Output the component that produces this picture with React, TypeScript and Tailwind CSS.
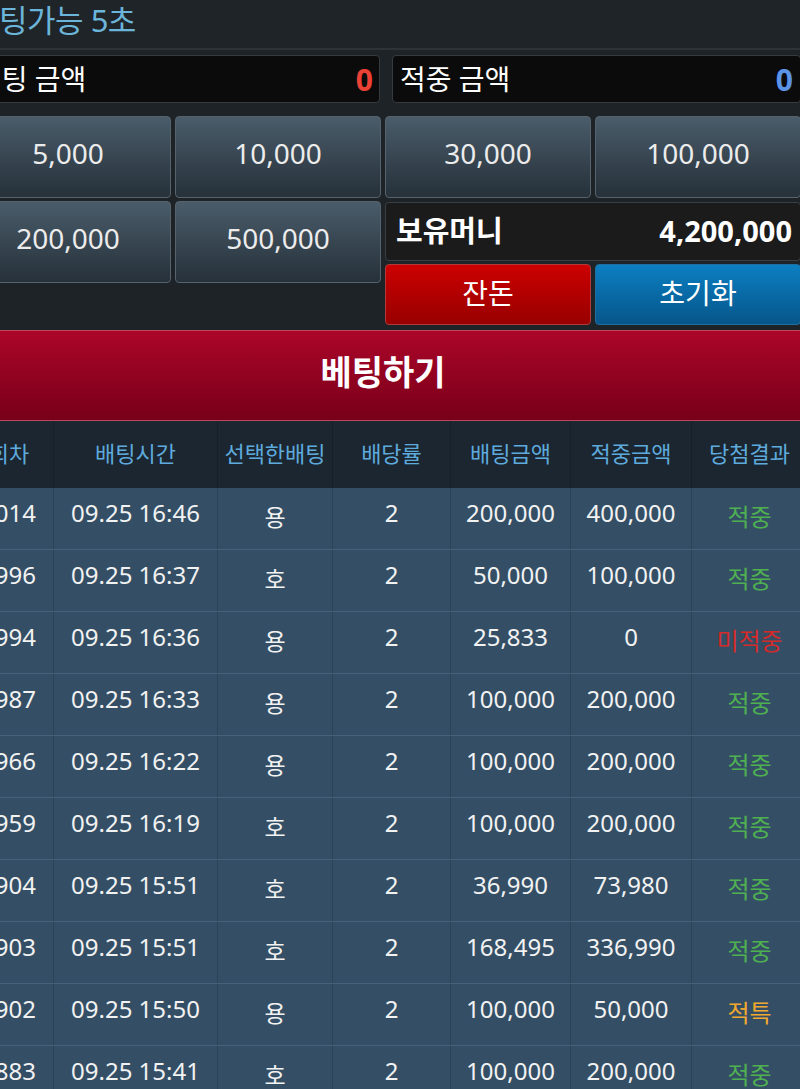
import React from "react";

type Row = {
  no: string;
  time: string;
  pick: string;
  odds: string;
  bet: string;
  win: string;
  result: "적중" | "미적중" | "적특";
};

const rows: Row[] = [
  { no: "1014", time: "09.25 16:46", pick: "용", odds: "2", bet: "200,000", win: "400,000", result: "적중" },
  { no: "996", time: "09.25 16:37", pick: "호", odds: "2", bet: "50,000", win: "100,000", result: "적중" },
  { no: "994", time: "09.25 16:36", pick: "용", odds: "2", bet: "25,833", win: "0", result: "미적중" },
  { no: "987", time: "09.25 16:33", pick: "용", odds: "2", bet: "100,000", win: "200,000", result: "적중" },
  { no: "966", time: "09.25 16:22", pick: "용", odds: "2", bet: "100,000", win: "200,000", result: "적중" },
  { no: "959", time: "09.25 16:19", pick: "호", odds: "2", bet: "100,000", win: "200,000", result: "적중" },
  { no: "904", time: "09.25 15:51", pick: "호", odds: "2", bet: "36,990", win: "73,980", result: "적중" },
  { no: "903", time: "09.25 15:51", pick: "호", odds: "2", bet: "168,495", win: "336,990", result: "적중" },
  { no: "902", time: "09.25 15:50", pick: "용", odds: "2", bet: "100,000", win: "50,000", result: "적특" },
  { no: "883", time: "09.25 15:41", pick: "호", odds: "2", bet: "100,000", win: "200,000", result: "적중" },
];

const resultColor: Record<Row["result"], string> = {
  적중: "text-[#4fb051]",
  미적중: "text-[#d42a2a]",
  적특: "text-[#f0a92e]",
};

function AmountButton({ label }: { label: string }) {
  return (
    <button className="h-[82px] w-full rounded-[4px] border border-[#56626c] bg-linear-to-b from-[#4a5c6a] to-[#26313a] text-[28px] text-[#ececec] flex items-center justify-center pb-[8px]">
      {label}
    </button>
  );
}

const grid = "grid grid-cols-[89px_164px_115px_118px_120px_121px_109px]";

export default function App() {
  return (
    <div className="w-[800px] h-[1089px] overflow-hidden bg-[#1e2327] font-['Noto_Sans','Noto_Sans_CJK_KR',sans-serif]">
      <div className="w-[836px] -ml-[35px]">
        {/* top bar */}
        <div className="h-[50px] border-b-2 border-[#2d3439] bg-[#1f2428] pl-[6px] flex items-center pb-[8px]">
          <span className="text-[31px] text-[#6cb5da] tracking-[-0.5px]">베팅가능 5초</span>
        </div>

        {/* amount boxes */}
        <div className="mt-[5px] flex gap-[12px] pl-[2px] h-[48px]">
          <div className="w-[413px] rounded-[4px] border border-[#363b40] bg-[#0b0b0b] flex items-center justify-between pl-[8px] pr-[6px]">
            <span className="text-[28px] text-white">베팅 금액</span>
            <span className="text-[30px] font-bold text-[#ec4236]">0</span>
          </div>
          <div className="flex-1 rounded-[4px] border border-[#363b40] bg-[#0b0b0b] flex items-center justify-between pl-[7px] pr-[7px]">
            <span className="text-[28px] text-white">적중 금액</span>
            <span className="text-[30px] font-bold text-[#5b93e6]">0</span>
          </div>
        </div>

        {/* buttons */}
        <div className="mt-[13px] flex gap-[4px]">
          <div className="w-[416px] grid grid-cols-2 gap-x-[4px] gap-y-[3px] self-start">
            <AmountButton label="5,000" />
            <AmountButton label="10,000" />
            <AmountButton label="200,000" />
            <AmountButton label="500,000" />
          </div>
          <div className="flex-1 flex flex-col">
            <div className="grid grid-cols-2 gap-x-[4px]">
              <AmountButton label="30,000" />
              <AmountButton label="100,000" />
            </div>
            <div className="mt-[4px] h-[59px] rounded-[4px] border border-[#3a3f44] bg-[#1b1b1b] flex items-center justify-between pl-[10px] pr-[8px] pb-[2px]">
              <span className="text-[29px] font-bold text-white">보유머니</span>
              <span className="text-[29px] font-bold text-white">4,200,000</span>
            </div>
            <div className="mt-[3px] grid grid-cols-2 gap-x-[4px] h-[61px]">
              <button className="rounded-[4px] border border-[#b03a3a] bg-linear-to-b from-[#cc0000] to-[#980000] text-[28px] text-white flex items-center justify-center pb-[4px]">
                잔돈
              </button>
              <button className="rounded-[4px] border border-[#1f6f9e] bg-linear-to-b from-[#0c7fc2] to-[#06568a] text-[28px] text-white flex items-center justify-center pb-[4px]">
                초기화
              </button>
            </div>
          </div>
        </div>

        {/* bet button */}
        <div className="mt-[5px] h-[91px] border-t border-b border-[#c0485c] bg-linear-to-b from-[#ac0629] to-[#780019] flex items-center justify-center">
          <span className="text-[34px] font-bold text-white pb-[6px]">베팅하기</span>
        </div>

        {/* table header */}
        <div className={`${grid} h-[67px] bg-[#1b2630] text-[22px] text-[#5eaadd]`}>
          {["회차", "배팅시간", "선택한배팅", "배당률", "배팅금액", "적중금액", "당첨결과"].map((h, i) => (
            <div
              key={h}
              className={`flex items-center justify-center pb-[2px] ${i < 6 ? "border-r border-[#15202a]" : ""} ${i === 6 ? "pl-[6px]" : ""}`}
            >
              {h}
            </div>
          ))}
        </div>

        {/* rows */}
        {rows.map((r, idx) => (
          <div
            key={idx}
            className={`${grid} h-[62px] bg-[#344f65] border-b border-[#46627a] text-[24px] text-[#f2f2f2]`}
          >
            <div className="flex items-center justify-end pr-[17px] pb-[12px] border-r border-[#2c4357]">{r.no}</div>
            <div className="flex items-center justify-center pb-[12px] border-r border-[#2c4357]">{r.time}</div>
            <div className="flex items-center justify-center pb-[2px] text-[23px] border-r border-[#2c4357]">{r.pick}</div>
            <div className="flex items-center justify-center pb-[12px] border-r border-[#2c4357]">{r.odds}</div>
            <div className="flex items-center justify-center pb-[12px] border-r border-[#2c4357]">{r.bet}</div>
            <div className="flex items-center justify-center pb-[12px] border-r border-[#2c4357]">{r.win}</div>
            <div className={`flex items-center justify-center pb-[4px] pl-[6px] text-[24px] ${resultColor[r.result]}`}>
              {r.result}
            </div>
          </div>
        ))}
      </div>
    </div>
  );
}
